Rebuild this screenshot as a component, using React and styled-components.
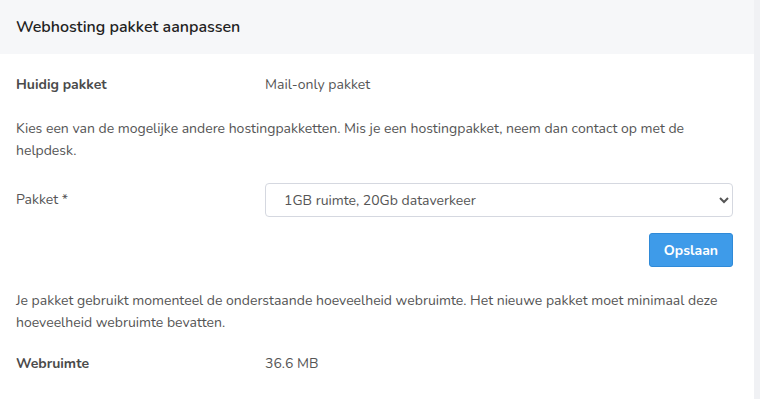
import React from 'react'
import styled, { createGlobalStyle } from 'styled-components'

const GlobalStyle = createGlobalStyle`
  html, body {
    margin: 0;
    padding: 0;
    background: #f0f1f4;
  }
  body {
    font-family: "Nunito", "Open Sans", "Noto Sans", sans-serif;
    color: #555;
  }
`;

const Card = styled.div`
  width: 754px;
  min-height: 399px;
  background: #fff;
`;

const Header = styled.div`
  height: 54px;
  display: flex;
  align-items: center;
  padding: 0 16px;
  background: #f6f7f9;
  box-sizing: border-box;
`;

const Title = styled.h3`
  margin: 0;
  font-size: 16px;
  font-weight: 600;
  color: #222;
`;

const Body = styled.div`
  padding: 20px 21px 0 16px;
  font-size: 14px;
  line-height: 22px;
`;

const Row = styled.div`
  display: grid;
  grid-template-columns: 249px 1fr;
  align-items: center;
  margin-bottom: ${p => p.$gap || 0}px;
`;

const Label = styled.div`
  font-weight: 700;
  color: #4a4a4a;
`;

const Value = styled.div`
  color: #555;
`;

const Text = styled.p`
  margin: 0 0 ${p => p.$gap || 0}px;
  color: #555;
`;

const FieldLabel = styled.label`
  color: #555;
`;

const Select = styled.select`
  height: 34px;
  width: 100%;
  padding: 0 10px 0 14px;
  border: 1px solid #d5d8e0;
  border-radius: 4px;
  background: #fff;
  font-family: inherit;
  font-size: 14px;
  color: #555;
`;

const Actions = styled.div`
  display: flex;
  justify-content: flex-end;
  margin: 16px 0 23px;
`;

const Button = styled.button`
  height: 34px;
  padding: 0 14px;
  border: 1px solid #2f8ad8;
  border-radius: 3px;
  background: #3e9be9;
  color: #fff;
  font-family: inherit;
  font-size: 14px;
  font-weight: 700;
`;

export default function App() {
  return (
    <>
      <GlobalStyle />
      <Card>
        <Header>
          <Title>Webhosting pakket aanpassen</Title>
        </Header>
        <Body>
          <Row $gap={22}>
            <Label>Huidig pakket</Label>
            <Value>Mail-only pakket</Value>
          </Row>
          <Text $gap={21}>
            Kies een van de mogelijke andere hostingpakketten. Mis je een hostingpakket, neem dan contact op met de helpdesk.
          </Text>
          <Row>
            <FieldLabel>Pakket *</FieldLabel>
            <Select defaultValue="1gb">
              <option value="1gb">1GB ruimte, 20Gb dataverkeer</option>
            </Select>
          </Row>
          <Actions>
            <Button>Opslaan</Button>
          </Actions>
          <Text $gap={19}>
            Je pakket gebruikt momenteel de onderstaande hoeveelheid webruimte. Het nieuwe pakket moet minimaal deze hoeveelheid webruimte bevatten.
          </Text>
          <Row>
            <Label>Webruimte</Label>
            <Value>36.6 MB</Value>
          </Row>
        </Body>
      </Card>
    </>
  )
}
